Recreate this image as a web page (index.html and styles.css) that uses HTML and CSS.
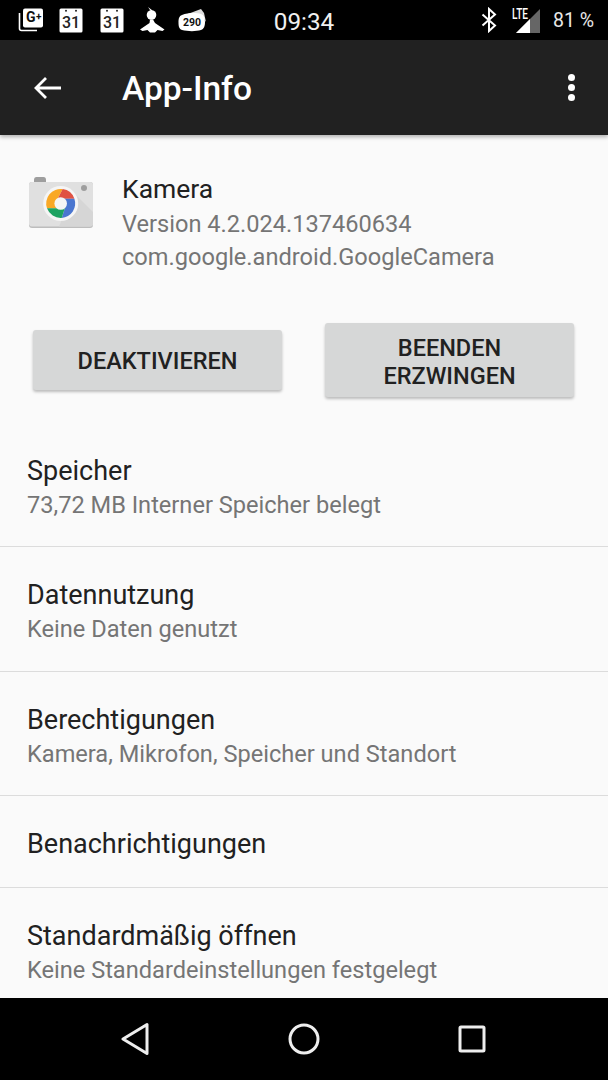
FILE: index.html
```html
<!DOCTYPE html>
<html lang="de">
<head>
<meta charset="utf-8">
<title>App-Info</title>
<link rel="stylesheet" href="styles.css">
</head>
<body>
<div class="screen">
  <header class="statusbar">
    <div class="status-left">
      <svg class="ico-gplus" width="26" height="26" viewBox="0 0 26 26">
        <path d="M1.500 6v15.500a2 2 0 0 0 2 2H19" fill="none" stroke="#fff" stroke-width="1.600"/>
        <rect x="5" y="1.500" width="20" height="19" rx="2" fill="#fff"/>
        <text x="8" y="15" class="gtext">G</text>
        <text x="18" y="13" class="gplus">+</text>
      </svg>
      <svg width="26" height="26" viewBox="0 0 26 26">
        <path d="M3 1.500h20a1.500 1.500 0 0 1 1.500 1.500v21a1.500 1.500 0 0 1-1.500 1.500h-20a1.500 1.500 0 0 1-1.500-1.500v-21a1.500 1.500 0 0 1 1.500-1.500z" fill="#fff"/>
        <circle cx="8" cy="3.800" r="1" fill="#222"/><circle cx="18" cy="3.800" r="1" fill="#222"/>
        <text x="13" y="21" class="caltext">31</text>
      </svg>
      <svg width="26" height="26" viewBox="0 0 26 26">
        <path d="M3 1.500h20a1.500 1.500 0 0 1 1.500 1.500v21a1.500 1.500 0 0 1-1.500 1.500h-20a1.500 1.500 0 0 1-1.500-1.500v-21a1.500 1.500 0 0 1 1.500-1.500z" fill="#fff"/>
        <circle cx="8" cy="3.800" r="1" fill="#222"/><circle cx="18" cy="3.800" r="1" fill="#222"/>
        <text x="13" y="21" class="caltext">31</text>
      </svg>
      <svg width="28" height="28" viewBox="0 0 28 28">
        <circle cx="13.500" cy="9" r="4.800" fill="#fff"/>
        <path d="M10 1l4.500 3.500-1.500 1z" fill="#fff"/>
        <path d="M12 13.500h3l2 3.500 9.500 6.500-2 1.500-5-1-2.500 2.500h-5l-2.500-2.500-5 1-2.500-1.500 9.500-6.500z" fill="#fff"/>
      </svg>
      <svg width="30" height="26" viewBox="0 0 30 26">
        <path d="M3 9.500 23 2l3 4 2 9-5-7z" fill="#ddd"/>
        <path d="M4 8c6-2.500 14-2.500 19-1 3 1 4 4 4 8s-1 7-4 8c-5 1.500-13 1.500-19 0-3-1-3.500-4-3.500-7.500S1 9 4 8z" fill="#fff"/>
        <text x="14" y="19" class="cointext">290</text>
      </svg>
    </div>
    <div class="clock">09:34</div>
    <div class="status-right">
      <svg width="16" height="26" viewBox="0 0 16 26">
        <path d="M1.500 7.500 14 18.500 8 24V2l6 5.500L1.500 18.500" fill="none" stroke="#fff" stroke-width="2"/>
      </svg>
      <div class="signal">
        <span class="lte">LTE</span>
        <svg width="24" height="24" viewBox="0 0 24 24">
          <path d="M0 24 24 0v24z" fill="#666"/>
          <path d="M0 24 14 10v14z" fill="#fff"/>
        </svg>
      </div>
      <span class="battery">81 %</span>
    </div>
  </header>

  <div class="appbar">
    <svg class="back" width="30" height="26" viewBox="0 0 30 26">
      <path d="M28 13H3M13 3 3 13l10 10" fill="none" stroke="#fff" stroke-width="2.800"/>
    </svg>
    <h1 class="appbar-title">App-Info</h1>
    <div class="overflow"><i></i><i></i><i></i></div>
  </div>

  <main class="content">
    <section class="app-head">
      <svg class="app-icon" width="64" height="56" viewBox="0 0 64 56">
        <path d="M5 4Q5 1 7.500 1h7Q17 1 17 4v2H5z" fill="#9e9e9e"/>
        <rect x="0" y="6" width="64" height="46" rx="3" fill="#bdbdbd"/>
        <rect x="0" y="6" width="64" height="44.500" rx="3" fill="#e0e0e0"/>
        <path d="M44 16 64 36v11.500a3 3 0 0 1-3 3H30z" fill="#d6d6d6"/>
        <circle cx="55" cy="12" r="3" fill="#9e9e9e"/>
        <g transform="translate(31.700 27.500)">
          <circle r="17.500" fill="#f5f5f5"/>
          <path d="M2 -14.400A14.500 14.500 0 0 0 -13.700 4.800L-3 4.800-5.500 0z" fill="#f9a825"/>
          <path d="M2 -14.400A14.500 14.500 0 0 1 13.700 -4.800L2 -4.800 0 -5-5.500 0z" fill="#e05243"/>
          <path d="M13.700 -4.800A14.500 14.500 0 0 1 1 14.400L5 2 2 -4.800z" fill="#4a76d0"/>
          <path d="M1 14.400A14.500 14.500 0 0 1 -13.700 4.800L-3 4.800 5 2z" fill="#1ea362"/>
          <circle r="6.300" fill="#f5f5f5"/>
        </g>
      </svg>
      <div class="app-meta">
        <div class="app-name">Kamera</div>
        <div class="app-sub">Version 4.2.024.137460634</div>
        <div class="app-sub">com.google.android.GoogleCamera</div>
      </div>
    </section>

    <section class="actions">
      <button class="btn">DEAKTIVIEREN</button>
      <button class="btn">BEENDEN<br>ERZWINGEN</button>
    </section>

    <section class="list">
      <div class="row">
        <div class="row-title">Speicher</div>
        <div class="row-sub">73,72 MB Interner Speicher belegt</div>
      </div>
      <div class="row">
        <div class="row-title">Datennutzung</div>
        <div class="row-sub">Keine Daten genutzt</div>
      </div>
      <div class="row">
        <div class="row-title">Berechtigungen</div>
        <div class="row-sub">Kamera, Mikrofon, Speicher und Standort</div>
      </div>
      <div class="row row-single">
        <div class="row-title">Benachrichtigungen</div>
      </div>
      <div class="row">
        <div class="row-title">Standardmäßig öffnen</div>
        <div class="row-sub">Keine Standardeinstellungen festgelegt</div>
      </div>
    </section>
  </main>

  <nav class="navbar">
    <svg width="28" height="34" viewBox="0 0 28 34">
      <path d="M26 2.500v29L2 17z" fill="none" stroke="#eee" stroke-width="3" stroke-linejoin="round"/>
    </svg>
    <svg width="32" height="32" viewBox="0 0 32 32">
      <circle cx="16" cy="16" r="14" fill="none" stroke="#eee" stroke-width="3"/>
    </svg>
    <svg width="28" height="28" viewBox="0 0 28 28">
      <rect x="2" y="2" width="24" height="24" rx="1" fill="none" stroke="#eee" stroke-width="3"/>
    </svg>
  </nav>
</div>
</body>
</html>
```

FILE: styles.css
```css
* { box-sizing: border-box; }
html, body { margin: 0; padding: 0; }
body { font-family: Roboto, "Liberation Sans", sans-serif; background: #000; }

.screen {
  width: 608px;
  height: 1080px;
  display: flex;
  flex-direction: column;
  overflow: hidden;
}

.statusbar {
  flex: none;
  height: 40px;
  background: #000;
  color: #fff;
  display: grid;
  grid-template-columns: 1fr auto 1fr;
  align-items: center;
  padding: 0 18px;
}
.status-left { display: flex; align-items: center; gap: 15px; }
.status-left svg:nth-child(1) { margin-right: -1px; }
.status-left svg:nth-child(4) { margin: 0 -2px 0 -2px; }
.status-left svg:nth-child(5) { margin-left: -1px; }
.gtext { font: 700 14px Roboto, sans-serif; fill: #111; }
.gplus { font: 700 10px Roboto, sans-serif; fill: #111; }
.caltext { font: 500 16px Roboto, sans-serif; fill: #222; text-anchor: middle; }
.cointext { font: 700 10.500px Roboto, sans-serif; fill: #111; text-anchor: middle; }
.clock { font-size: 24.300px; color: #f0f0f0; padding-top: 2px; }
.status-right { display: flex; align-items: center; justify-content: flex-end; margin-right: -4px; }
.signal { position: relative; width: 28px; height: 26px; margin-left: 15px; display: flex; align-items: flex-end; justify-content: flex-end; }
.lte { position: absolute; left: 0; top: -1px; font: 500 14px Roboto, sans-serif; transform: scaleX(0.72); transform-origin: left; }
.battery { font-size: 19.500px; color: #e8e8e8; margin-left: 13px; padding-top: 1px; }

.appbar {
  flex: none;
  height: 95px;
  background: #212121;
  display: flex;
  align-items: center;
  padding: 0 33px 0 33px;
  box-shadow: 0 2px 4px rgba(0, 0, 0, 0.3);
  position: relative;
  z-index: 1;
}
.back { flex: none; margin-right: 59px; }
.appbar-title { flex: 1; margin: 2px 0 0; font-size: 33.500px; font-weight: 500; color: #fff; }
.overflow { display: flex; flex-direction: column; gap: 3px; }
.overflow i { display: block; width: 7px; height: 7px; border-radius: 50%; background: #fff; }

.content { flex: 1; background: #fafafa; overflow: hidden; min-height: 0; }

.app-head { display: flex; padding: 40px 0 0 29px; height: 195px; }
.app-icon { flex: none; margin-right: 29px; margin-top: 1px; }
.app-meta { margin-top: -3px; }
.app-name { font-size: 26.500px; line-height: 33px; color: #212121; margin-bottom: 3px; }
.app-sub { font-size: 23.600px; line-height: 33px; color: #757575; }

.actions { display: flex; align-items: center; gap: 43px; padding: 0 34px 0 33px; margin-top: -7px; height: 74px; }
.btn {
  flex: 1;
  border: 0;
  border-radius: 3px;
  background: #d6d7d7;
  color: #212121;
  font: 500 23.500px/28px Roboto, sans-serif;
  padding: 2px 0 0;
  height: 60px;
  box-shadow: 0 2px 3px rgba(0, 0, 0, 0.25);
}
.btn + .btn { height: 74px; padding-top: 3px; }

.list { margin-top: 25.500px; }
.row {
  height: 124.500px;
  padding-top: 32px;
  padding-left: 27px;
  border-bottom: 1.500px solid #dcdcdc;
}
.row-single { height: 92px; }
.row:last-child { border-bottom: 0; }
.row-title { font-size: 27px; line-height: 33px; color: #212121; }
.row-sub { font-size: 23.600px; line-height: 33px; color: #757575; margin-top: 1px; }

.navbar {
  flex: none;
  height: 82px;
  background: #000;
  display: flex;
  align-items: center;
  justify-content: space-between;
  padding: 0 122px 0 121px;
}
```
